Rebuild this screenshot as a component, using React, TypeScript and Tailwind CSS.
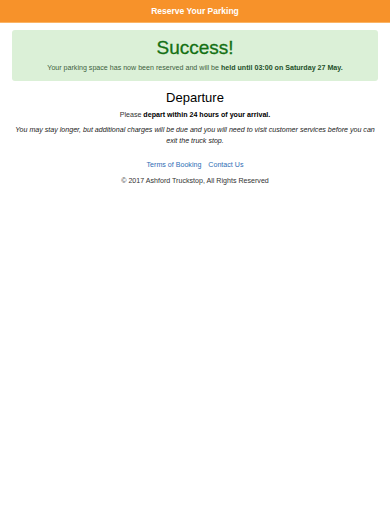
export default function App() {
  return (
    <div className="min-h-[512px] bg-white font-['Liberation_Sans',Arial,sans-serif]">
      <header className="flex h-[23px] items-center justify-center border-b border-[#fbb465] bg-[#f7922a]">
        <span className="text-[8.5px] font-bold text-white">Reserve Your Parking</span>
      </header>
      <div className="mx-3 mt-[7px] flex flex-col items-center rounded-[3px] bg-[#dbf0d7] pt-[7px] pb-[8.5px]">
        <h1 className="text-[19px] leading-[22px] text-[#147014] [-webkit-text-stroke:0.3px_#147014]">Success!</h1>
        <p className="mt-[4.5px] text-[7.1px] leading-[9px] text-[#3d5f3d]">
          Your parking space has now been reserved and will be{" "}
          <b className="text-[#24502a]">held until 03:00 on Saturday 27 May.</b>
        </p>
      </div>
      <div className="mt-[9px] flex flex-col items-center px-3 text-center">
        <h2 className="text-[13px] leading-[16px] text-black">Departure</h2>
        <p className="mt-[4.5px] text-[7.1px] leading-[9px] text-[#333]">
          Please <b className="text-black">depart within 24 hours of your arrival.</b>
        </p>
        <p className="mt-[5px] text-[7.1px] leading-[11px] text-[#222] italic">
          You may stay longer, but additional charges will be due and you will need to visit customer services before you can exit the truck stop.
        </p>
        <div className="mt-[14.5px] flex gap-[7px] text-[7.1px] leading-[9px] text-[#2f6db5]">
          <span>Terms of Booking</span>
          <span>Contact Us</span>
        </div>
        <p className="mt-[7px] text-[7.1px] leading-[9px] text-[#333]">© 2017 Ashford Truckstop, All Rights Reserved</p>
      </div>
    </div>
  )
}
